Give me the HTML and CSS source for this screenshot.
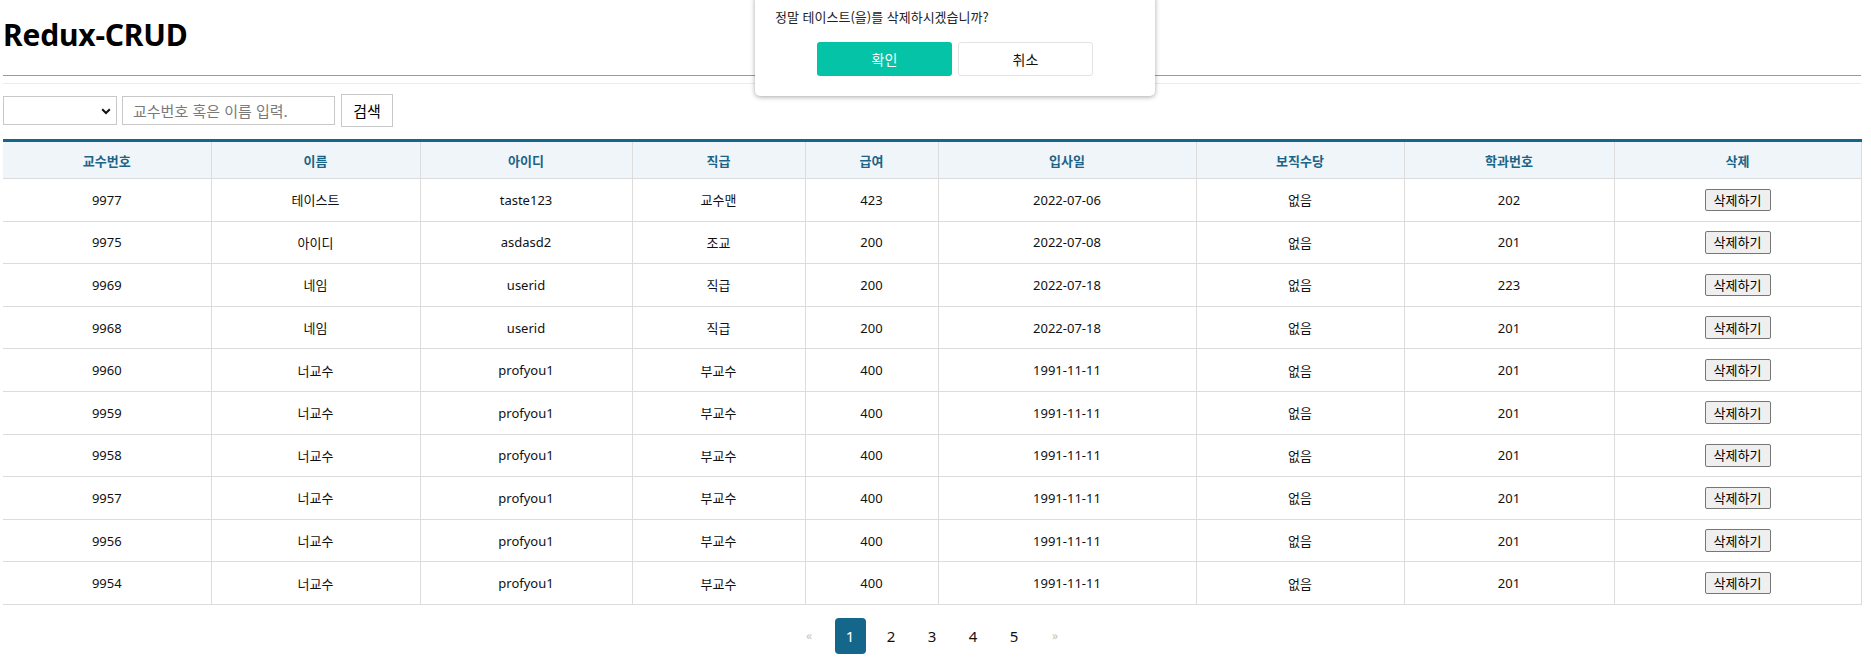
FILE: index.html
```html
<!DOCTYPE html>
<html lang="ko">
<head>
<meta charset="utf-8">
<title>Redux-CRUD</title>
<link rel="stylesheet" href="styles.css">
</head>
<body>
<div class="page">
  <h1 class="title">Redux-CRUD</h1>
  <hr class="rule">
  <div class="toolbar">
    <div class="select-wrap">
      <select class="select"><option></option><option>교수번호</option><option>이름</option></select>
      <svg class="chev" width="10" height="7" viewBox="0 0 10 7"><path d="M1.2 1.2 L5 5 L8.8 1.2" fill="none" stroke="#111" stroke-width="2"/></svg>
    </div>
    <input class="search" type="text" placeholder="교수번호 혹은 이름 입력.">
    <button class="search-btn">검색</button>
  </div>
  <table class="grid">
    <colgroup>
      <col style="width:208px"><col style="width:209px"><col style="width:212px"><col style="width:173px"><col style="width:133px"><col style="width:258px"><col style="width:208px"><col style="width:210px"><col style="width:247px">
    </colgroup>
    <thead>
      <tr><th>교수번호</th><th>이름</th><th>아이디</th><th>직급</th><th>급여</th><th>입사일</th><th>보직수당</th><th>학과번호</th><th>삭제</th></tr>
    </thead>
    <tbody>
      <tr><td>9977</td><td>테이스트</td><td>taste123</td><td>교수맨</td><td>423</td><td>2022-07-06</td><td>없음</td><td>202</td><td><button class="del">삭제하기</button></td></tr>
      <tr><td>9975</td><td>아이디</td><td>asdasd2</td><td>조교</td><td>200</td><td>2022-07-08</td><td>없음</td><td>201</td><td><button class="del">삭제하기</button></td></tr>
      <tr><td>9969</td><td>네임</td><td>userid</td><td>직급</td><td>200</td><td>2022-07-18</td><td>없음</td><td>223</td><td><button class="del">삭제하기</button></td></tr>
      <tr><td>9968</td><td>네임</td><td>userid</td><td>직급</td><td>200</td><td>2022-07-18</td><td>없음</td><td>201</td><td><button class="del">삭제하기</button></td></tr>
      <tr><td>9960</td><td>너교수</td><td>profyou1</td><td>부교수</td><td>400</td><td>1991-11-11</td><td>없음</td><td>201</td><td><button class="del">삭제하기</button></td></tr>
      <tr><td>9959</td><td>너교수</td><td>profyou1</td><td>부교수</td><td>400</td><td>1991-11-11</td><td>없음</td><td>201</td><td><button class="del">삭제하기</button></td></tr>
      <tr><td>9958</td><td>너교수</td><td>profyou1</td><td>부교수</td><td>400</td><td>1991-11-11</td><td>없음</td><td>201</td><td><button class="del">삭제하기</button></td></tr>
      <tr><td>9957</td><td>너교수</td><td>profyou1</td><td>부교수</td><td>400</td><td>1991-11-11</td><td>없음</td><td>201</td><td><button class="del">삭제하기</button></td></tr>
      <tr><td>9956</td><td>너교수</td><td>profyou1</td><td>부교수</td><td>400</td><td>1991-11-11</td><td>없음</td><td>201</td><td><button class="del">삭제하기</button></td></tr>
      <tr><td>9954</td><td>너교수</td><td>profyou1</td><td>부교수</td><td>400</td><td>1991-11-11</td><td>없음</td><td>201</td><td><button class="del">삭제하기</button></td></tr>
    </tbody>
  </table>
  <nav class="pager">
    <span class="pg pg-dim">«</span>
    <span class="pg pg-active">1</span>
    <span class="pg">2</span>
    <span class="pg">3</span>
    <span class="pg">4</span>
    <span class="pg">5</span>
    <span class="pg pg-dim">»</span>
  </nav>
</div>
<div class="dialog">
  <p class="dialog-msg">정말 테이스트(을)를 삭제하시겠습니까?</p>
  <div class="dialog-actions">
    <button class="btn-ok">확인</button>
    <button class="btn-cancel">취소</button>
  </div>
</div>
</body>
</html>
```
FILE: styles.css
```css
* { box-sizing: border-box; }
html, body { margin: 0; padding: 0; background: #fff; }
body {
  font-family: "Noto Sans", "Noto Sans CJK KR", sans-serif;
  color: #111;
  width: 1871px;
  height: 672px;
  overflow: hidden;
  position: relative;
}
.page {
  width: 1858px;
  margin-left: 3px;
}
.title {
  margin: 15px 0 0;
  font-size: 30px;
  line-height: 40px;
  font-weight: 700;
  color: #000;
  letter-spacing: -0.2px;
}
.rule {
  margin: 20px 0 0;
  height: 9px;
  border: 0;
  border-top: 1px solid #9a9a9a;
  border-bottom: 1px solid #ececec;
}
.toolbar {
  display: flex;
  align-items: center;
  gap: 5px;
  margin-top: 10px;
  height: 33px;
}
.select-wrap {
  position: relative;
  width: 114px;
  height: 29px;
}
.select {
  appearance: none;
  -webkit-appearance: none;
  width: 100%;
  height: 100%;
  border: 1px solid #c8c8c8;
  background: #fff;
  border-radius: 0;
  margin: 0;
}
.chev {
  position: absolute;
  right: 6px;
  top: 12px;
}
.search {
  width: 213px;
  height: 29px;
  border: 1px solid #c8c8c8;
  padding: 0 10px;
  font-family: "Noto Sans CJK KR", sans-serif;
  font-size: 15px;
  margin: 0;
  outline: none;
}
.search::placeholder { color: #7a7a7a; }
.search-btn {
  margin-left: 1px;
  width: 52px;
  height: 33px;
  border: 1px solid #c8c8c8;
  background: #fff;
  font-family: "Noto Sans CJK KR", sans-serif;
  font-size: 15px;
  color: #000;
  padding: 0;
}
.grid {
  margin-top: 12px;
  width: 1858px;
  table-layout: fixed;
  border-collapse: collapse;
  border-top: 3px solid #14668a;
  font-size: 13px;
}
.grid th {
  height: 38px;
  background: #f0f5f9;
  color: #1b6488;
  font-family: "Noto Sans CJK KR", sans-serif;
  font-weight: 700;
  font-size: 13px;
  border-bottom: 1px solid #dcdcdc;
  border-left: 1px solid #dcdcdc;
  padding: 0;
  text-align: center;
}
.grid td {
  height: 42.6px;
  padding: 0;
  text-align: center;
  border-bottom: 1px solid #dcdcdc;
  border-left: 1px solid #dcdcdc;
  color: #111;
  font-family: "Noto Sans", "Noto Sans CJK KR", sans-serif;
}
.grid th:first-child, .grid td:first-child { border-left: 0; }
.grid th:last-child, .grid td:last-child { border-right: 1px solid #dcdcdc; }
.del {
  height: 22.6px;
  width: 66px;
  padding: 0;
  font-family: "Noto Sans CJK KR", sans-serif;
  font-size: 13px;
  background: #efefef;
  border: 1px solid #767676;
  border-radius: 2px;
  color: #000;
  line-height: 20px;
}
.pager {
  display: flex;
  justify-content: center;
  gap: 10px;
  margin-top: 13px;
}
.pg {
  width: 31px;
  height: 36px;
  display: flex;
  align-items: center;
  justify-content: center;
  font-size: 15px;
  color: #111;
  border-radius: 4px;
}
.pg-active { background: #14668a; color: #fff; }
.pg-dim { color: #c4c4c4; font-size: 12px; }
.dialog {
  position: absolute;
  left: 755px;
  top: -6px;
  width: 400px;
  padding: 13px 20px 20px;
  background: #fff;
  border-radius: 5px;
  box-shadow: 0 1px 5px rgba(0,0,0,0.35);
}
.dialog-msg {
  margin: 0 0 15px;
  font-family: "Noto Sans CJK KR", sans-serif;
  font-size: 13px;
  line-height: 20px;
  color: #222;
}
.dialog-actions {
  display: flex;
  justify-content: center;
  gap: 6px;
}
.btn-ok, .btn-cancel {
  width: 135px;
  height: 34px;
  border-radius: 3px;
  font-family: "Noto Sans CJK KR", sans-serif;
  font-size: 14px;
  padding: 0;
}
.btn-ok { background: #05c3a7; color: #fff; border: 0; }
.btn-cancel { background: #fff; color: #111; border: 1px solid #e3e3e3; }
```
